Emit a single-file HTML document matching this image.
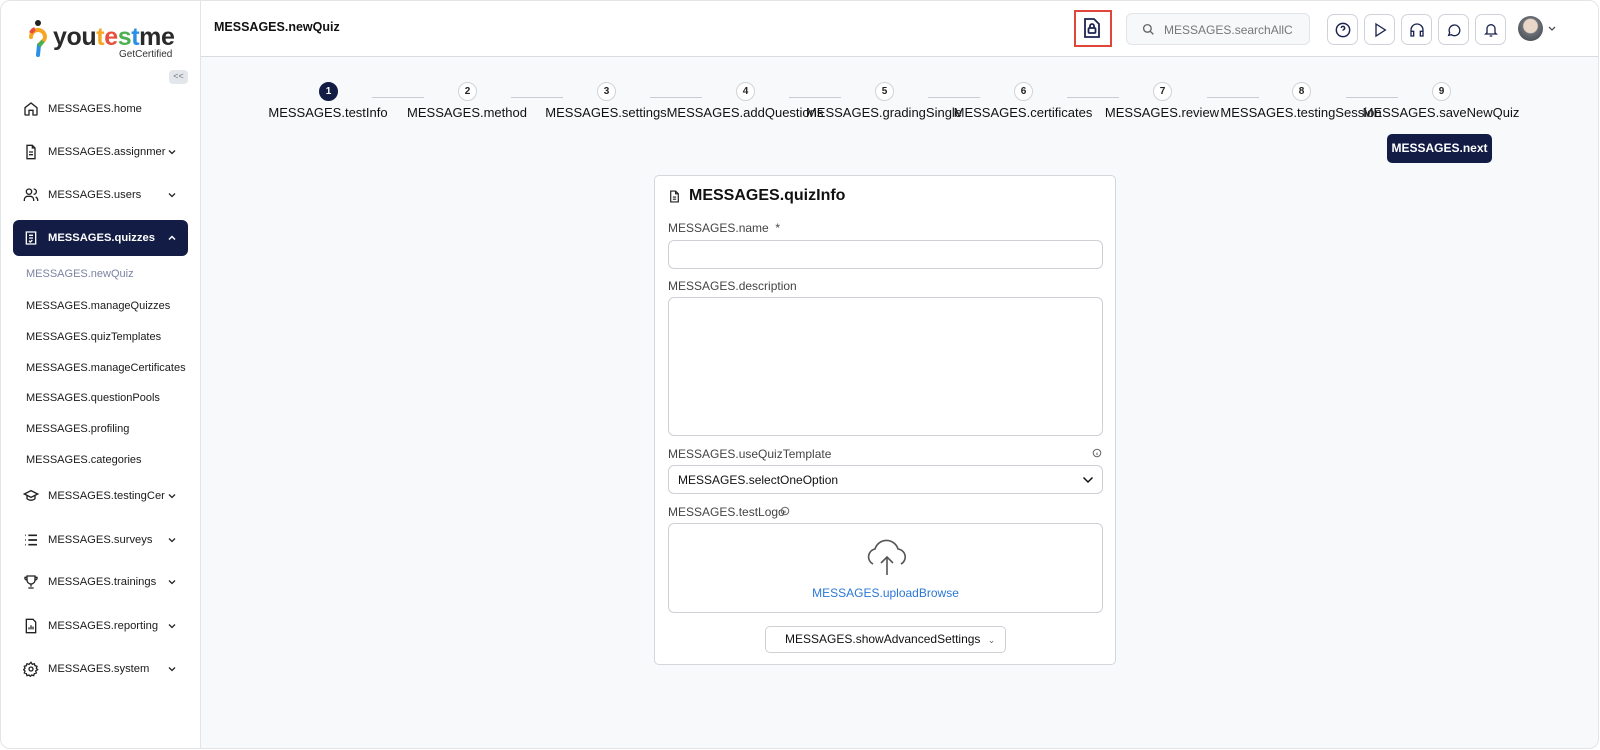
<!DOCTYPE html>
<html><head><meta charset="utf-8"><style>
*{box-sizing:border-box;margin:0;padding:0}
body{width:1600px;height:750px;overflow:hidden;background:#fff;font-family:"Liberation Sans",sans-serif;color:#111}
.frame{position:absolute;left:0;top:0;width:1599px;height:749px;border:1px solid #e2e4e8;border-radius:10px;overflow:hidden;background:#f8f9fb}
.side{position:absolute;left:0;top:0;width:200px;height:100%;background:#fff;border-right:1px solid #e2e4e8}
.hdr{position:absolute;left:200px;top:0;right:0;height:56px;background:#fff;border-bottom:1px solid #d9dce1}
.nav{position:absolute;left:12px;width:175px;height:36px;display:flex;align-items:center;font-size:11.2px;color:#1a1a1a}
.nav svg{position:absolute;left:10px}
.nav span{position:absolute;left:35px;white-space:nowrap;overflow:hidden;width:118px}
.sub{position:absolute;left:25px;font-size:11px;color:#1a1a1a}
.step{position:absolute;top:81px;width:19px;height:19px;border-radius:50%;border:1px solid #cfd3d9;background:#fff;font-size:10px;font-weight:bold;text-align:center;line-height:17px;color:#222}
.lab{position:absolute;top:104px;font-size:13px;color:#111;white-space:nowrap;transform:translateX(-50%)}
.ln{position:absolute;top:96px;height:1px;width:52px;background:#c9cdd3}
.ib{position:absolute;top:13px;width:31px;height:31px;border:1px solid #cfd3d9;border-radius:7px;background:#fff}
.ib svg{position:absolute;left:7px;top:7px}
.card{position:absolute;left:653px;top:174px;width:462px;height:490px;background:#fff;border:1px solid #d3d7dc;border-radius:5px}
.fl{position:absolute;left:13px;font-size:12px;color:#444}
.inp{position:absolute;left:13px;width:435px;border:1px solid #cdd1d6;border-radius:6px;background:#fff}
</style></head><body><div class="frame">
<div class="side">
<svg style="position:absolute;left:26px;top:18px" width="22" height="40" viewBox="0 0 22 40"><circle cx="11" cy="4" r="3" fill="#222"/><path d="M4 18a7 7 0 0 1 14 0c0 4-4 5-6 8" stroke="#f5a623" stroke-width="4" fill="none" stroke-linecap="round"/><path d="M4 14a7 7 0 0 1 4-4" stroke="#e94e3c" stroke-width="4" fill="none"/><path d="M12 26l-1 10" stroke="#2b8fe6" stroke-width="4" stroke-linecap="round"/><path d="M16 22l-4 5" stroke="#4caf50" stroke-width="4"/></svg>
<div style="position:absolute;left:52px;top:22px;font-size:25px;font-weight:bold;letter-spacing:-0.4px;color:#2a2a2a">you<span style="color:#f5a623">t</span><span style="color:#e94e3c">e</span><span style="color:#4caf50">s</span><span style="color:#2b8fe6">t</span>me</div>
<div style="position:absolute;left:118px;top:48px;font-size:10px;color:#333">GetCertified</div>
<div style="position:absolute;left:168px;top:69px;width:19px;height:14px;border-radius:4px;background:#e3e6ea;font-size:9px;color:#777;text-align:center;line-height:13px">&lt;&lt;</div>

<div class="nav" style="top:90px"><svg width="16" height="16" viewBox="0 0 24 24" fill="none" stroke="#222" stroke-width="2"><path d="M3 10l9-7 9 7v10a1 1 0 0 1-1 1h-5v-7h-6v7H4a1 1 0 0 1-1-1z"/></svg><span>MESSAGES.home</span></div>
<div class="nav" style="top:133px"><svg width="16" height="16" viewBox="0 0 24 24" fill="none" stroke="#222" stroke-width="2"><path d="M14 2H6v20h12V6z M14 2v4h4 M9 12h6 M9 16h6"/></svg><span>MESSAGES.assignmer</span><svg style="left:153px" width="12" height="12" viewBox="0 0 24 24" fill="none" stroke="#222" stroke-width="2.5"><path d="M6 9l6 6 6-6"/></svg></div>
<div class="nav" style="top:176px"><svg width="16" height="16" viewBox="0 0 24 24" fill="none" stroke="#222" stroke-width="2"><circle cx="9" cy="7" r="4"/><path d="M2 21v-2a5 5 0 0 1 5-5h4a5 5 0 0 1 5 5v2 M16 3a4 4 0 0 1 0 8 M22 21v-2a5 5 0 0 0-3-4"/></svg><span>MESSAGES.users</span><svg style="left:153px" width="12" height="12" viewBox="0 0 24 24" fill="none" stroke="#222" stroke-width="2.5"><path d="M6 9l6 6 6-6"/></svg></div>
<div class="nav" style="top:219px;background:#121c44;border-radius:6px;color:#fff;font-weight:bold"><svg width="16" height="16" viewBox="0 0 24 24" fill="none" stroke="#fff" stroke-width="2"><path d="M5 3h14v18H5z M9 8h6 M9 12h6 M9 16l2 2 3-3"/></svg><span>MESSAGES.quizzes</span><svg style="left:153px" width="12" height="12" viewBox="0 0 24 24" fill="none" stroke="#fff" stroke-width="3"><path d="M6 15l6-6 6 6"/></svg></div>
<div class="sub" style="top:267px;color:#7c83a3">MESSAGES.newQuiz</div>
<div class="sub" style="top:299px">MESSAGES.manageQuizzes</div>
<div class="sub" style="top:330px">MESSAGES.quizTemplates</div>
<div class="sub" style="top:361px">MESSAGES.manageCertificates</div>
<div class="sub" style="top:391px">MESSAGES.questionPools</div>
<div class="sub" style="top:422px">MESSAGES.profiling</div>
<div class="sub" style="top:453px">MESSAGES.categories</div>
<div class="nav" style="top:477px"><svg width="16" height="16" viewBox="0 0 24 24" fill="none" stroke="#222" stroke-width="2"><path d="M2 9l10-5 10 5-10 5z M6 11v5c3 3 9 3 12 0v-5"/></svg><span>MESSAGES.testingCer</span><svg style="left:153px" width="12" height="12" viewBox="0 0 24 24" fill="none" stroke="#222" stroke-width="2.5"><path d="M6 9l6 6 6-6"/></svg></div>
<div class="nav" style="top:521px"><svg width="16" height="16" viewBox="0 0 24 24" fill="none" stroke="#222" stroke-width="2.5"><path d="M3 5h1 M8 5h13 M3 12h1 M8 12h13 M3 19h1 M8 19h13"/></svg><span>MESSAGES.surveys</span><svg style="left:153px" width="12" height="12" viewBox="0 0 24 24" fill="none" stroke="#222" stroke-width="2.5"><path d="M6 9l6 6 6-6"/></svg></div>
<div class="nav" style="top:563px"><svg width="16" height="16" viewBox="0 0 24 24" fill="none" stroke="#222" stroke-width="2"><path d="M6 3h12v6a6 6 0 0 1-12 0z M12 15v4 M8 21h8 M6 5H3a3 3 0 0 0 3 4 M18 5h3a3 3 0 0 1-3 4"/></svg><span>MESSAGES.trainings</span><svg style="left:153px" width="12" height="12" viewBox="0 0 24 24" fill="none" stroke="#222" stroke-width="2.5"><path d="M6 9l6 6 6-6"/></svg></div>
<div class="nav" style="top:607px"><svg width="16" height="16" viewBox="0 0 24 24" fill="none" stroke="#222" stroke-width="2"><path d="M5 2h10l4 4v16H5z M9 17v-3 M12 17v-6 M15 17v-4"/></svg><span>MESSAGES.reporting</span><svg style="left:153px" width="12" height="12" viewBox="0 0 24 24" fill="none" stroke="#222" stroke-width="2.5"><path d="M6 9l6 6 6-6"/></svg></div>
<div class="nav" style="top:650px"><svg width="16" height="16" viewBox="0 0 24 24" fill="none" stroke="#222" stroke-width="2"><circle cx="12" cy="12" r="3"/><path d="M12 2l2 3 3-1 1 3 3 1-1 3 2 2-3 2 1 3-3 1-1 3-3-1-2 2-2-2-3 1-1-3-3-1 1-3-2-2 2-2-1-3 3-1 1-3 3 1z"/></svg><span>MESSAGES.system</span><svg style="left:153px" width="12" height="12" viewBox="0 0 24 24" fill="none" stroke="#222" stroke-width="2.5"><path d="M6 9l6 6 6-6"/></svg></div>
</div>

<div class="hdr">
<div style="position:absolute;left:13px;top:19px;font-size:12.5px;font-weight:bold">MESSAGES.newQuiz</div>
<div style="position:absolute;left:873px;top:9px;width:38px;height:37px;border:2px solid #e0453a"></div>
<svg style="position:absolute;left:882px;top:17px" width="18" height="20" viewBox="0 0 18 20" fill="none" stroke="#1b2450" stroke-width="1.8"><path d="M2 1h9l5 5v13H2z"/><rect x="5.5" y="10" width="7" height="5" rx="1"/><path d="M7 10V8a2 2 0 0 1 4 0v2"/></svg>
<div style="position:absolute;left:925px;top:12px;width:184px;height:32px;border:1px solid #e1e4e8;border-radius:6px;background:#f7f8fa"><svg style="position:absolute;left:15px;top:9px" width="13" height="13" viewBox="0 0 24 24" fill="none" stroke="#666" stroke-width="2.5"><circle cx="10" cy="10" r="7"/><path d="M15 15l6 6"/></svg><span style="position:absolute;left:37px;top:9px;font-size:12px;color:#777">MESSAGES.searchAllC</span></div>
<div class="ib" style="left:1126px"><svg width="16" height="16" viewBox="0 0 24 24" fill="none" stroke="#1b2450" stroke-width="2.2"><circle cx="12" cy="12" r="10"/><path d="M9.5 9a2.5 2.5 0 1 1 3.5 2.3c-.7.4-1 1-1 1.7 M12 17h.01"/></svg></div>
<div class="ib" style="left:1163px"><svg width="16" height="16" viewBox="0 0 24 24" fill="none" stroke="#1b2450" stroke-width="2"><path d="M6 3l14 9-14 9z"/></svg></div>
<div class="ib" style="left:1200px"><svg width="16" height="16" viewBox="0 0 24 24" fill="none" stroke="#1b2450" stroke-width="2"><path d="M3 18v-6a9 9 0 0 1 18 0v6 M3 14h4v7H3z M17 14h4v7h-4z"/></svg></div>
<div class="ib" style="left:1237px"><svg width="16" height="16" viewBox="0 0 24 24" fill="none" stroke="#1b2450" stroke-width="2"><path d="M4 20l1.5-4A8 8 0 1 1 8 19z"/></svg></div>
<div class="ib" style="left:1274px"><svg width="16" height="16" viewBox="0 0 24 24" fill="none" stroke="#1b2450" stroke-width="2"><path d="M6 16V10a6 6 0 0 1 12 0v6l2 2H4z M10 21h4"/></svg></div>
<div style="position:absolute;left:1317px;top:15px;width:25px;height:25px;border-radius:50%;background:radial-gradient(circle at 50% 40%,#e8d6c8 0 35%,#6b6f76 40%,#3b3f47)"></div>
<svg style="position:absolute;left:1347px;top:25px" width="8" height="6" viewBox="0 0 8 6" fill="none" stroke="#555" stroke-width="1.3"><path d="M1 1l3 3 3-3"/></svg>
</div>

<div class="step" style="left:318px;background:#121c44;border-color:#121c44;color:#fff">1</div>
<div class="step" style="left:457px">2</div><div class="step" style="left:596px">3</div><div class="step" style="left:735px">4</div><div class="step" style="left:874px">5</div><div class="step" style="left:1013px">6</div><div class="step" style="left:1152px">7</div><div class="step" style="left:1291px">8</div><div class="step" style="left:1431px">9</div>
<div class="ln" style="left:371px"></div><div class="ln" style="left:510px"></div><div class="ln" style="left:649px"></div><div class="ln" style="left:788px"></div><div class="ln" style="left:927px"></div><div class="ln" style="left:1066px"></div><div class="ln" style="left:1206px"></div><div class="ln" style="left:1345px"></div>
<div class="lab" style="left:327px">MESSAGES.testInfo</div>
<div class="lab" style="left:466px">MESSAGES.method</div>
<div class="lab" style="left:605px">MESSAGES.settings</div>
<div class="lab" style="left:744px">MESSAGES.addQuestions</div>
<div class="lab" style="left:883px">MESSAGES.gradingSingle</div>
<div class="lab" style="left:1022px">MESSAGES.certificates</div>
<div class="lab" style="left:1161px">MESSAGES.review</div>
<div class="lab" style="left:1300px">MESSAGES.testingSession</div>
<div class="lab" style="left:1440px">MESSAGES.saveNewQuiz</div>
<div style="position:absolute;left:1386px;top:133px;width:105px;height:29px;background:#121c44;border-radius:5px;color:#fff;font-size:12px;font-weight:bold;text-align:center;line-height:29px">MESSAGES.next</div>

<div class="card">
<svg style="position:absolute;left:13px;top:13px" width="13" height="15" viewBox="0 0 24 24" fill="none" stroke="#222" stroke-width="2.2"><path d="M14 2H5v20h14V7z M14 2v5h5 M9 13h6 M9 17h6"/></svg>
<div style="position:absolute;left:34px;top:11px;font-size:16px;font-weight:bold">MESSAGES.quizInfo</div>
<div class="fl" style="top:45px">MESSAGES.name&nbsp; *</div>
<div class="inp" style="top:64px;height:29px"></div>
<div class="fl" style="top:103px">MESSAGES.description</div>
<div class="inp" style="top:121px;height:139px"></div>
<div class="fl" style="top:271px">MESSAGES.useQuizTemplate</div>
<svg style="position:absolute;left:437px;top:272px" width="10" height="10" viewBox="0 0 24 24" fill="none" stroke="#666" stroke-width="2.5"><circle cx="12" cy="12" r="9"/><path d="M12 11v6 M12 7h.01"/></svg>
<div class="inp" style="top:289px;height:29px"><span style="position:absolute;left:9px;top:7px;font-size:12px;color:#111">MESSAGES.selectOneOption</span><svg style="position:absolute;left:413px;top:9px" width="12" height="10" viewBox="0 0 24 20" fill="none" stroke="#111" stroke-width="3"><path d="M3 5l9 9 9-9"/></svg></div>
<div class="fl" style="top:329px">MESSAGES.testLogo</div>
<svg style="position:absolute;left:125px;top:330px" width="10" height="10" viewBox="0 0 24 24" fill="none" stroke="#666" stroke-width="2.5"><circle cx="12" cy="12" r="9"/><path d="M12 11v6 M12 7h.01"/></svg>
<div class="inp" style="top:347px;height:90px"><svg style="position:absolute;left:194px;top:12px" width="48" height="40" viewBox="0 0 48 40" fill="none" stroke="#555" stroke-width="1.6"><path d="M10 28a8 8 0 0 1 2-15 12 12 0 0 1 23 0 8 8 0 0 1 3 15"/><path d="M24 39V21 M18 27l6-6 6 6"/></svg><span style="position:absolute;left:0;width:100%;text-align:center;top:62px;font-size:12px;color:#2a78d6">MESSAGES.uploadBrowse</span></div>
<div style="position:absolute;left:110px;top:450px;width:241px;height:27px;border:1px solid #cdd1d6;border-radius:5px;font-size:12px;color:#111;line-height:25px;padding-left:19px">MESSAGES.showAdvancedSettings <span style="font-size:9px;color:#666;margin-left:4px">&#8964;</span></div>
</div>
</div></body></html>
